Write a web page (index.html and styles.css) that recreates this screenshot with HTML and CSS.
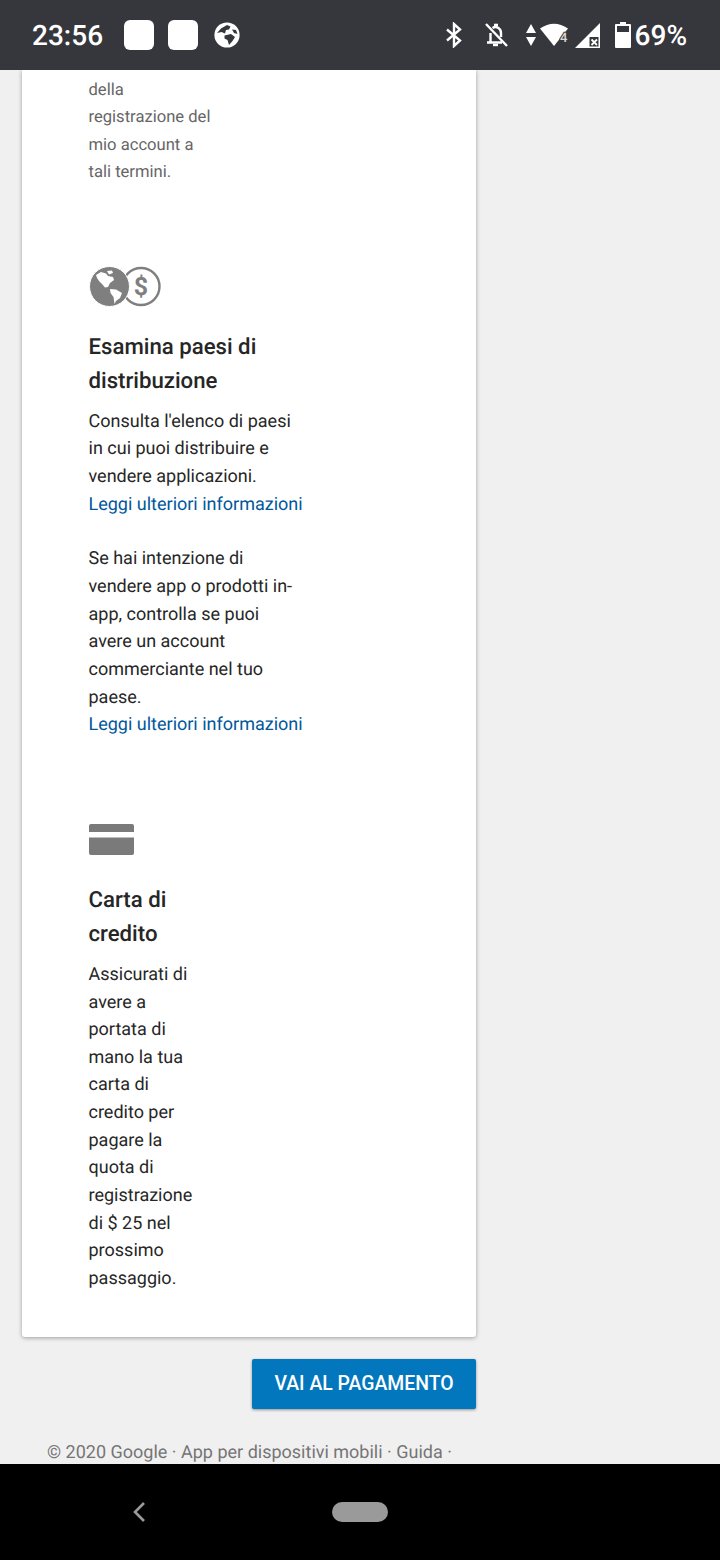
FILE: index.html
```html
<!DOCTYPE html>
<html lang="it">
<head>
    <meta charset="UTF-8">
    <meta name="viewport" content="width=device-width, initial-scale=1.0">
    <title>Registrazione</title>
    <link rel="stylesheet" href="styles.css">
</head>
<body>
    <!-- Status bar -->
    <header class="status-bar">
        <div class="status-left">
            <span class="clock">23:56</span>
            <span class="app-square"></span>
            <span class="app-square"></span>
            <svg class="globe-small" viewBox="0 0 26 26" width="26" height="26">
                <circle cx="13" cy="13" r="12.6" fill="#fff"/>
                <path d="M3 11 L7 6.5 L13 3 L16.5 4.5 L15 7.5 L12 8 L11 11.5 L7.5 10 Z" fill="#36373c"/>
                <path d="M10.5 13.5 L17 12 L21 15 L18.5 19 L15 23 L13.5 18 L10.5 16.5 Z" fill="#36373c"/>
                <path d="M18 7.5 L22 8 L23.5 12 L20 11 Z" fill="#36373c"/>
            </svg>
        </div>
        <div class="status-right">
            <svg class="bt-icon" viewBox="0 0 18 26" width="18" height="26">
                <path d="M2 7.5 L15 18.5 L9 24 L9 2 L15 7.5 L2 18.5" fill="none" stroke="#fff" stroke-width="2.4"/>
            </svg>
            <svg class="bell-icon" viewBox="0 0 26 26" width="26" height="26">
                <path d="M4 20.5 H19 M7.5 20.5 V11 M18 15 V11 A5.5 6 0 0 0 9.5 6" fill="none" stroke="#fff" stroke-width="2.4"/>
                <path d="M10 23 H15" stroke="#fff" stroke-width="2.4"/>
                <path d="M11 3 H15" stroke="#fff" stroke-width="2.6"/>
                <path d="M3 2 L24 24" stroke="#fff" stroke-width="2.4"/>
            </svg>
            <svg class="updown-icon" viewBox="0 0 10 22" width="10" height="22">
                <path d="M5 0 L10 9 H0 Z M0 13 H10 L5 22 Z" fill="#fff"/>
            </svg>
            <svg class="wifi-icon" viewBox="0 0 30 24" width="30" height="24">
                <path d="M0 5.5 Q14 -4 28 5.5 L14 23 Z" fill="#fff"/>
                <text x="20" y="19" class="wifi-num">4</text>
            </svg>
            <svg class="signal-icon" viewBox="0 0 25 25" width="25" height="25">
                <path d="M0 25 L25 0 V25 Z" fill="#fff"/>
                <rect x="14.5" y="14" width="9" height="9.5" fill="#36373c"/>
                <path d="M16.5 16.5 L22 22 M22 16.5 L16.5 22" stroke="#fff" stroke-width="1.8"/>
            </svg>
            <svg class="battery-icon" viewBox="0 0 16 26" width="16" height="26">
                <path d="M5 0 H11 V2 H15 Q16 2 16 3 V25 Q16 26 15 26 H1 Q0 26 0 25 V3 Q0 2 1 2 H5 Z" fill="#fff"/>
                <rect x="2" y="4" width="12" height="6" fill="#36373c"/>
            </svg>
            <span class="battery-text">69%</span>
        </div>
    </header>

    <main class="content">
        <section class="card">
            <p class="intro">della<br>registrazione del<br>mio account a<br>tali termini.</p>

            <div class="block block-countries">
                <svg class="icon-globes" viewBox="0 0 72 41" width="72" height="41">
                    <circle cx="52" cy="20.5" r="18.5" fill="none" stroke="#7f7f7f" stroke-width="2.4"/>
                    <text x="52" y="29" class="dollar">$</text>
                    <circle cx="20.5" cy="20.5" r="20" fill="#7f7f7f" stroke="#fff" stroke-width="1"/>
                    <!-- continents -->
                    <path d="M7 9 L12 6 L17 7.5 L19 10 L24 11 L25 14 L21 17 L19 21 L16 21.5 L13 18 L10 15 L8 12 Z" fill="#fff"/>
                    <path d="M18 5 L23 4.5 L24 7 L20 8.5 Z" fill="#fff"/>
                    <path d="M21 23 L27 23.5 L33 27 L31 32 L27 35 L25.5 38 L24.5 31 L21.5 27 Z" fill="#fff"/>
                </svg>
                <h2>Esamina paesi di<br>distribuzione</h2>
                <p>Consulta l'elenco di paesi<br>in cui puoi distribuire e<br>vendere applicazioni.<br><a href="#">Leggi ulteriori informazioni</a></p>
                <p>Se hai intenzione di<br>vendere app o prodotti in-<br>app, controlla se puoi<br>avere un account<br>commerciante nel tuo<br>paese.<br><a href="#">Leggi ulteriori informazioni</a></p>
            </div>

            <div class="block block-card">
                <svg class="icon-card" viewBox="0 0 45 31" width="45" height="31">
                    <path d="M0 8 V2 Q0 0 2 0 H43 Q45 0 45 2 V8 Z" fill="#7a7a7a"/>
                    <path d="M0 13.5 H45 V29 Q45 31 43 31 H2 Q0 31 0 29 Z" fill="#7a7a7a"/>
                </svg>
                <h2>Carta di<br>credito</h2>
                <p>Assicurati di<br>avere a<br>portata di<br>mano la tua<br>carta di<br>credito per<br>pagare la<br>quota di<br>registrazione<br>di $ 25 nel<br>prossimo<br>passaggio.</p>
            </div>
        </section>

        <div class="actions">
            <button class="pay-btn">VAI AL PAGAMENTO</button>
        </div>

        <footer class="page-footer">© 2020 Google · App per dispositivi mobili · Guida ·</footer>
    </main>

    <!-- Navigation bar -->
    <nav class="nav-bar">
        <svg class="nav-back" viewBox="0 0 14 22" width="14" height="22">
            <path d="M12 2 L3 11 L12 20" fill="none" stroke="#9a9a9a" stroke-width="2.6"/>
        </svg>
        <span class="nav-home"></span>
    </nav>
</body>
</html>
```

FILE: styles.css
```css
/* General Styles */
html, body {
    margin: 0;
    padding: 0;
    height: 1560px;
    overflow: hidden;
}

body {
    display: flex;
    flex-direction: column;
    font-family: Roboto, "Liberation Sans", sans-serif;
    text-rendering: geometricPrecision;
    background-color: #f0f0f0;
}

/* Status bar */
.status-bar {
    height: 70px;
    flex: none;
    background-color: #36373c;
    color: #fff;
    display: flex;
    align-items: center;
    justify-content: space-between;
    padding: 0 33px 0 32px;
}

.status-left, .status-right {
    display: flex;
    align-items: center;
}

.clock {
    font-size: 28px;
    font-weight: 500;
    width: 92px;
}

.app-square {
    width: 30px;
    height: 30px;
    background-color: #fff;
    border-radius: 6px;
    margin-right: 14px;
}

.globe-small {
    margin-left: 2px;
}

.bt-icon { margin-right: 20px; }
.bell-icon { margin-right: 17px; }
.updown-icon { margin-right: 4px; }
.wifi-icon { margin-right: 5px; }
.signal-icon { margin-right: 15px; }
.battery-icon { margin-right: 4px; }

.wifi-num {
    font-size: 13px;
    font-weight: 500;
    fill: #d8d8d8;
    stroke: #36373c;
    stroke-width: 2px;
    paint-order: stroke;
}

.battery-text {
    font-size: 28px;
    font-weight: 500;
}

/* Page content */
.content {
    flex: 1;
    min-height: 0;
    overflow: hidden;
    padding: 0 244px 0 22px;
}

.card {
    background-color: #fff;
    border-radius: 0 0 3px 3px;
    box-shadow: 0 1px 4px rgba(0, 0, 0, 0.35);
    padding: 6.5px 66px 44px 66.5px;
}

.intro {
    margin: 0;
    font-size: 16.6px;
    line-height: 27.65px;
    color: #666;
}

.block p {
    margin: 0 0 27px;
    font-size: 18px;
    line-height: 27.65px;
    color: #262626;
}

.block p:last-child {
    margin-bottom: 0;
}

.block h2 {
    margin: 0 0 9.5px;
    font-size: 22.2px;
    font-weight: 500;
    line-height: 33.5px;
    color: #262626;
}

.block a {
    color: #01579b;
    text-decoration: none;
}

.block svg {
    display: block;
}

.block-countries {
    margin-top: 79px;
}

.block-countries h2 {
    margin-top: 24px;
}

.block-card {
    margin-top: 85px;
}

.block-card h2 {
    margin-top: 29.5px;
}

.dollar {
    font-size: 25px;
    font-weight: 700;
    fill: #7f7f7f;
    text-anchor: middle;
}

/* Button */
.actions {
    display: flex;
    justify-content: flex-end;
    margin-top: 22px;
}

.pay-btn {
    height: 50px;
    width: 224px;
    border: none;
    border-radius: 2px;
    background-color: #0277bd;
    color: #fff;
    font-family: inherit;
    font-size: 19.4px;
    font-weight: 500;
    box-shadow: 0 1px 3px rgba(0, 0, 0, 0.4);
}

/* Footer */
.page-footer {
    margin: 33px 0 0 25px;
    font-size: 18px;
    line-height: 22px;
    color: #757575;
    white-space: nowrap;
}

/* Navigation bar */
.nav-bar {
    height: 96px;
    flex: none;
    background-color: #000;
    position: relative;
}

.nav-back {
    position: absolute;
    left: 132px;
    top: 37px;
}

.nav-home {
    position: absolute;
    left: 332px;
    top: 38px;
    width: 56px;
    height: 20px;
    border-radius: 10px;
    background-color: #9a9a9a;
}
```
